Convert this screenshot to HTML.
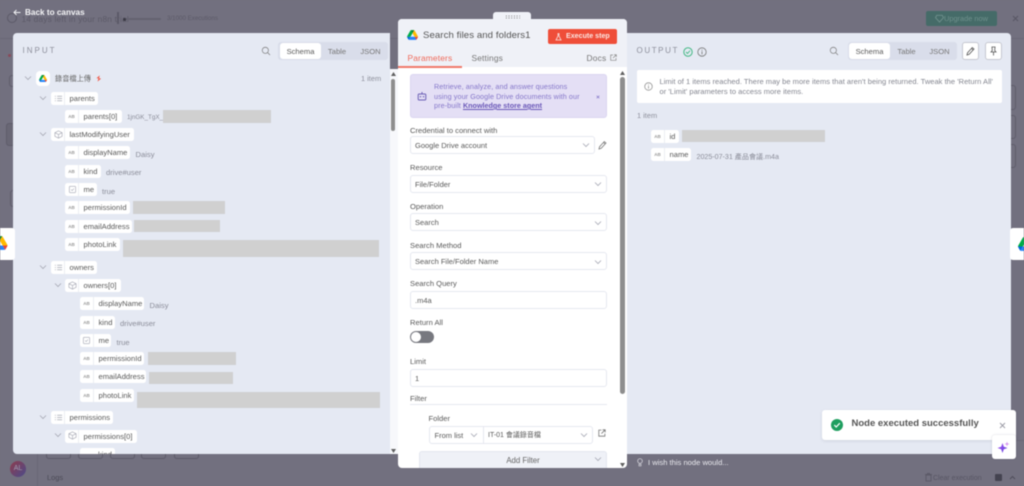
<!DOCTYPE html>
<html lang="en"><head><meta charset="utf-8"><title>Search files and folders1</title>
<style>
*{box-sizing:border-box}
html,body{margin:0;padding:0;width:1024px;height:486px;overflow:hidden;background:#72707f}
body{font-family:"Liberation Sans","Noto Sans CJK TC",sans-serif;font-size:7.6px;color:#5a5a5a}
#r{position:absolute;left:0;top:0;width:1024px;height:486px;overflow:hidden;filter:blur(.45px)}
#r div,#r span.a,#r svg.a{position:absolute}
.t{white-space:nowrap;line-height:12px}
.pill{height:13px;background:#fff;border-radius:2.5px;color:#5a5a5a;line-height:14px;white-space:nowrap}
.pill i{position:absolute;left:0;top:0;bottom:0;width:14px;border-right:1px solid #eceef3;font-style:normal;font-size:4.5px;color:#999;text-align:center;font-weight:bold;line-height:13px}
.pill b{position:absolute;left:18.5px;top:0;font-weight:normal}
.v{color:#8b8d99;white-space:nowrap;line-height:12px;margin-top:1px}
.g{background:#d0d0d0}
.lb{color:#5a5a5a;white-space:nowrap;line-height:12px;left:410px;margin-top:1px}
.f{left:410px;width:197px;height:18px;background:#fff;border:1px solid #e6e8f0;border-radius:3px;padding-left:4px;line-height:17.5px;color:#5a5a5a;font-size:7.5px;white-space:nowrap}
.seg{background:#d9ddea;border-radius:3px;height:18px}
.seg span{position:absolute;top:1px;height:16px;line-height:17.5px;text-align:center;color:#777;font-size:7.6px}
.seg span.on{background:#fff;border-radius:3px;color:#5a5a5a}
.btn{width:17px;height:18px;background:#fff;border:1px solid #c6c8d0;border-radius:3px}
.o{border:1px solid #5f5d6b;border-radius:3px}
</style></head><body>
<svg width="0" height="0" style="position:absolute"><defs>
<symbol id="gd" viewBox="0 0 87.3 78"><path d="m6.6 66.85 3.85 6.65c.8 1.4 1.95 2.5 3.3 3.3l13.75-23.8h-27.5c0 1.55.4 3.1 1.2 4.5z" fill="#0066da"/><path d="m43.65 25-13.75-23.8c-1.35.8-2.5 1.9-3.3 3.3l-25.4 44a9.06 9.06 0 0 0-1.2 4.5h27.5z" fill="#00ac47"/><path d="m73.55 76.8c1.35-.8 2.5-1.9 3.3-3.3l1.6-2.75 7.65-13.25c.8-1.4 1.2-2.95 1.2-4.5h-27.502l5.852 11.5z" fill="#ea4335"/><path d="m43.65 25 13.75-23.8c-1.35-.8-2.9-1.2-4.5-1.2h-18.5c-1.6 0-3.15.45-4.5 1.2z" fill="#00832d"/><path d="m59.8 53h-32.3l-13.75 23.8c1.35.8 2.9 1.2 4.5 1.2h50.8c1.6 0 3.15-.45 4.5-1.2z" fill="#2684fc"/><path d="m73.4 26.5-12.7-22c-.8-1.4-1.95-2.5-3.3-3.3l-13.75 23.8 16.15 28h27.45c0-1.55-.4-3.1-1.2-4.5z" fill="#ffba00"/></symbol>
<symbol id="dn" viewBox="0 0 8 8"><path d="M1 2.5 4 5.5 7 2.5" fill="none" stroke="#a5a7b3" stroke-width=".8"/></symbol>
<symbol id="ls" viewBox="0 0 10 10"><path d="M3.5 2.5H9M3.5 5H9M3.5 7.5H9M1 2.5h1M1 5h1M1 7.5h1" stroke="#a5a7b3" stroke-width=".7" fill="none"/></symbol>
<symbol id="ob" viewBox="0 0 10 10"><path d="M5 1 9 3V7L5 9 1 7V3ZM1 3 5 5 9 3M5 5V9" stroke="#a5a7b3" stroke-width=".7" fill="none"/></symbol>
<symbol id="ck" viewBox="0 0 10 10"><rect x="1.5" y="1.5" width="7" height="7" rx="1" stroke="#a5a7b3" stroke-width=".7" fill="none"/><path d="M3.5 5 4.7 6.2 6.6 4" stroke="#a5a7b3" stroke-width=".6" fill="none"/></symbol>
<symbol id="se" viewBox="0 0 12 12"><circle cx="5.2" cy="5.2" r="3.7" stroke="#777" fill="none" stroke-width=".8"/><path d="M8 8 10.8 10.8" stroke="#777" stroke-width=".8"/></symbol>
</defs></svg>
<div id="r">
<!-- background app -->
<div style="left:0;top:0;width:1024px;height:486px;background:#72707f"></div>
<div style="left:0;top:38px;width:1024px;height:1px;background:#6a6876"></div>
<div style="left:37px;top:440px;width:987px;height:1px;background:#6a6876"></div>
<div style="left:37px;top:38px;width:1px;height:448px;background:#6a6876"></div>
<div class="o" style="left:9px;top:75px;width:6px;height:12px"></div>
<div class="o" style="left:6px;top:123px;width:9px;height:23px;background:#696775"></div>
<div class="o" style="left:10px;top:190px;width:6px;height:17px"></div>
<div style="left:8px;top:54px;width:3px;height:3px;border-radius:50%;background:#8a4a5a"></div>
<div class="o" style="left:1005px;top:85px;width:11px;height:25px"></div>
<div class="o" style="left:1005px;top:115px;width:11px;height:24px"></div>
<div class="o" style="left:1005px;top:144px;width:11px;height:24px"></div>
<div class="t" style="left:21.5px;top:13px;color:#5c5a68;font-size:8.3px;letter-spacing:.2px">14 days left in your n8n trial</div>
<div style="left:7px;top:13px;width:10px;height:10px;border:1px solid #5c5a68;border-radius:50%"></div>
<div style="left:117px;top:12px;width:1.5px;height:12px;background:#5c5a68"></div>
<div style="left:123px;top:18px;width:38px;height:2px;background:#646270;border-radius:1px"></div>
<div style="left:123px;top:17.5px;width:3px;height:3px;background:#3b3a45;border-radius:1.5px"></div>
<div class="t" style="left:167px;top:13px;color:#5c5a68;font-size:6.2px">3/1000 Executions</div>
<div style="left:926px;top:11px;width:71px;height:15px;background:#456b68;border-radius:2px;color:#6f908c;line-height:16px;font-size:7.4px;padding-left:18px">Upgrade now</div>
<svg class="a" style="left:935px;top:14px" width="9" height="9" viewBox="0 0 10 10"><path d="M2 1.5H8L9.5 4 5 9 .5 4Z" fill="none" stroke="#6f908c"/></svg>
<svg class="a" style="left:1012px;top:15px" width="7" height="7" viewBox="0 0 7 7"><path d="M1 1 6 6M6 1 1 6" stroke="#585664" stroke-width="1"/></svg>
<div style="left:10px;top:461px;width:16px;height:16px;border-radius:50%;background:linear-gradient(135deg,#8d3c4e,#4b4b8a);color:#a29fb0;text-align:center;line-height:16px;font-size:7px">AL</div>
<div class="t" style="left:47px;top:472px;color:#4b4a56;font-size:7.4px">Logs</div>
<div class="t" style="left:933px;top:472.5px;color:#585664;font-size:7px">Clear execution</div>
<svg class="a" style="left:925px;top:473px" width="7" height="9" viewBox="0 0 7 9"><path d="M1 2H6V8H1ZM0 1.5H7M2.5 1V.4H4.5V1" stroke="#585664" fill="none" stroke-width=".8"/></svg>
<div style="left:995px;top:474px;width:7px;height:7px;background:#444350;border-radius:1px"></div>
<svg class="a" style="left:1009px;top:475px" width="7" height="5" viewBox="0 0 7 5"><path d="M1 4 3.5 1.5 6 4" stroke="#504e5c" fill="none"/></svg>
<div style="left:46px;top:454px;width:25px;height:5px;border:1px solid #5c5a68;border-top:0;border-radius:0 0 3px 3px"></div>
<div style="left:78px;top:454px;width:25px;height:5px;border:1px solid #5c5a68;border-top:0;border-radius:0 0 3px 3px"></div>
<div style="left:110px;top:454px;width:25px;height:5px;border:1px solid #5c5a68;border-top:0;border-radius:0 0 3px 3px"></div>
<div style="left:141px;top:454px;width:25px;height:5px;border:1px solid #5c5a68;border-top:0;border-radius:0 0 3px 3px"></div>
<div style="left:174px;top:454px;width:25px;height:5px;border:1px solid #5c5a68;border-top:0;border-radius:0 0 3px 3px"></div>

<div class="t" style="left:25px;top:7px;color:#f4f4f6;font-size:8.2px;font-weight:bold;line-height:12px">Back to canvas</div>
<svg class="a" style="left:13px;top:9px" width="8" height="7" viewBox="0 0 8 7"><path d="M7.5 3.5H1M3.5 1 1 3.5 3.5 6" stroke="#f0f0f3" fill="none" stroke-width="1"/></svg>

<!-- LEFT PANEL -->
<div style="left:13px;top:33px;width:377px;height:421px;background:#e5e9f3;border-radius:4px 0 0 4px"></div>
<div style="left:390px;top:69px;width:7.5px;height:385px;background:#f7f8fb"></div>
<div style="left:391px;top:79px;width:4px;height:52px;background:#8e8e8e;border-radius:2px"></div>
<svg class="a" style="left:390.5px;top:72px" width="5" height="4"><path d="M0 4H5L2.5 0Z" fill="#5f5f5f"/></svg>
<svg class="a" style="left:390.5px;top:449px" width="5" height="4"><path d="M0 0H5L2.5 4Z" fill="#5f5f5f"/></svg>
<div class="t" style="left:22.5px;top:44.5px;color:#8d8f9b;font-size:8px;letter-spacing:2px">INPUT</div>
<svg class="a" style="left:261px;top:46px" width="10" height="10"><use href="#se"/></svg>
<div class="seg" style="left:278px;top:42px;width:110px"><span class="on" style="left:2px;width:41px">Schema</span><span style="left:41px;width:36px">Table</span><span style="left:77px;width:31px">JSON</span></div>

<svg class="a" style="left:24px;top:74px" width="8" height="8"><use href="#dn"/></svg>
<div style="left:36px;top:71px;width:14px;height:15px;background:#fff;border-radius:4px"></div>
<svg class="a" style="left:39px;top:75px" width="8" height="7.2"><use href="#gd"/></svg>
<div class="t" style="left:55px;top:72.5px;color:#666;font-size:7.2px">錄音檔上傳</div>
<svg class="a" style="left:95.5px;top:75px" width="5.5" height="7" viewBox="0 0 6 7"><path d="M3.6 0 .5 3.4H2.6L2.2 7 5.5 3.2H3.3Z" fill="#ef5a4a" transform="rotate(8 3 3.5)"/></svg>
<div class="t" style="left:361px;top:73px;color:#8d8f9b;font-size:7.4px">1 item</div>

<!-- rows -->
<svg class="a" style="left:39px;top:94px" width="8" height="8"><use href="#dn"/></svg>
<div class="pill" style="left:51px;top:92px;width:47px"><i></i><b>parents</b></div><svg class="a" style="left:54px;top:94px" width="9" height="9"><use href="#ls"/></svg>
<div class="pill" style="left:65px;top:110px;width:57px"><i>AB</i><b>parents[0]</b></div>
<div class="v" style="left:127px;top:111px;font-size:6.3px">1jnGK_TgX_</div><div class="g" style="left:163px;top:110px;width:108px;height:13px"></div>

<svg class="a" style="left:39px;top:130px" width="8" height="8"><use href="#dn"/></svg>
<div class="pill" style="left:51px;top:128px;width:83px"><i></i><b>lastModifyingUser</b></div><svg class="a" style="left:54px;top:130px" width="9" height="9"><use href="#ob"/></svg>
<div class="pill" style="left:65px;top:146px;width:65px"><i>AB</i><b>displayName</b></div><div class="v" style="left:135.5px;top:148px">Daisy</div>
<div class="pill" style="left:65px;top:165px;width:36px"><i>AB</i><b>kind</b></div><div class="v" style="left:106px;top:166px">drive#user</div>
<div class="pill" style="left:65px;top:183px;width:32px"><i></i><b>me</b></div><svg class="a" style="left:67.5px;top:185px" width="9" height="9"><use href="#ck"/></svg><div class="v" style="left:102px;top:185px">true</div>
<div class="pill" style="left:65px;top:201px;width:65px"><i>AB</i><b>permissionId</b></div><div class="g" style="left:133px;top:201px;width:92px;height:13px"></div>
<div class="pill" style="left:65px;top:220px;width:67px"><i>AB</i><b>emailAddress</b></div><div class="g" style="left:134px;top:220px;width:86px;height:12px"></div>
<div class="pill" style="left:65px;top:238px;width:55px"><i>AB</i><b>photoLink</b></div><div class="g" style="left:123px;top:240px;width:256px;height:17px"></div>

<svg class="a" style="left:39px;top:263px" width="8" height="8"><use href="#dn"/></svg>
<div class="pill" style="left:51px;top:261px;width:46px"><i></i><b>owners</b></div><svg class="a" style="left:54px;top:263px" width="9" height="9"><use href="#ls"/></svg>
<svg class="a" style="left:53.5px;top:281px" width="8" height="8"><use href="#dn"/></svg>
<div class="pill" style="left:65px;top:279px;width:56px"><i></i><b>owners[0]</b></div><svg class="a" style="left:68px;top:281px" width="9" height="9"><use href="#ob"/></svg>
<div class="pill" style="left:80px;top:297px;width:64px"><i>AB</i><b>displayName</b></div><div class="v" style="left:149.5px;top:299px">Daisy</div>
<div class="pill" style="left:80px;top:316px;width:35px"><i>AB</i><b>kind</b></div><div class="v" style="left:120px;top:317px">drive#user</div>
<div class="pill" style="left:80px;top:334px;width:31px"><i></i><b>me</b></div><svg class="a" style="left:82px;top:336px" width="9" height="9"><use href="#ck"/></svg><div class="v" style="left:116.5px;top:336px">true</div>
<div class="pill" style="left:80px;top:352px;width:64px"><i>AB</i><b>permissionId</b></div><div class="g" style="left:148px;top:352px;width:88px;height:13px"></div>
<div class="pill" style="left:80px;top:370px;width:66px"><i>AB</i><b>emailAddress</b></div><div class="g" style="left:149px;top:372px;width:84px;height:12px"></div>
<div class="pill" style="left:80px;top:389px;width:54px"><i>AB</i><b>photoLink</b></div><div class="g" style="left:137px;top:392px;width:243px;height:16px"></div>

<svg class="a" style="left:39px;top:413px" width="8" height="8"><use href="#dn"/></svg>
<div class="pill" style="left:51px;top:411px;width:62px"><i></i><b>permissions</b></div><svg class="a" style="left:54px;top:413px" width="9" height="9"><use href="#ls"/></svg>
<svg class="a" style="left:53.5px;top:431px" width="8" height="8"><use href="#dn"/></svg>
<div class="pill" style="left:65px;top:430px;width:72px"><i></i><b>permissions[0]</b></div><svg class="a" style="left:68px;top:431px" width="9" height="9"><use href="#ob"/></svg>
<div style="left:80px;top:448px;width:35px;height:6px;overflow:hidden;background:#fff;border-radius:2.5px 2.5px 0 0;color:#5a5a5a;line-height:13px;padding-left:18px">kind</div>

<!-- RIGHT PANEL -->
<div style="left:627px;top:33px;width:384px;height:421px;background:#e5e9f3;border-radius:0 4px 4px 0"></div>
<div class="t" style="left:636.5px;top:45px;color:#8d8f9b;font-size:8px;letter-spacing:1.6px">OUTPUT</div>
<svg class="a" style="left:683px;top:46.5px" width="10" height="10" viewBox="0 0 10 10"><circle cx="5" cy="5" r="4.2" stroke="#41b883" fill="none"/><path d="M3 5 4.5 6.5 7 3.7" stroke="#41b883" fill="none" stroke-width=".9"/></svg>
<svg class="a" style="left:697px;top:46.5px" width="10" height="10" viewBox="0 0 10 10"><circle cx="5" cy="5" r="4.2" stroke="#777" fill="none" stroke-width=".8"/><path d="M5 4.3V7.4M5 2.6V3.5" stroke="#777" stroke-width=".8"/></svg>
<svg class="a" style="left:829px;top:46px" width="10" height="10"><use href="#se"/></svg>
<div class="seg" style="left:848px;top:42px;width:109px"><span class="on" style="left:1px;width:41px">Schema</span><span style="left:41px;width:35px">Table</span><span style="left:75px;width:33px">JSON</span></div>
<div class="btn" style="left:962px;top:42px"></div>
<svg class="a" style="left:966px;top:46px" width="9" height="10" viewBox="0 0 9 10"><path d="M1 9 1.5 6.8 6.3 1.5 8 3 3.2 8.3ZM5.5 2.4 7.2 3.9" stroke="#555" fill="none" stroke-width=".8"/></svg>
<div class="btn" style="left:985px;top:42px"></div>
<svg class="a" style="left:989px;top:46px" width="9" height="10" viewBox="0 0 9 10"><path d="M3 1H6L5.7 4.5 7 6H2L3.3 4.5ZM4.5 6V9.5M2.5 1H6.5" stroke="#555" fill="none" stroke-width=".8"/></svg>

<div style="left:637px;top:70px;width:365px;height:33px;background:#fff;border-radius:2px"></div>
<svg class="a" style="left:643.5px;top:81.5px" width="9" height="9" viewBox="0 0 10 10"><circle cx="5" cy="5" r="4.2" stroke="#888" fill="none" stroke-width=".8"/><path d="M5 4.3V7.4M5 2.6V3.5" stroke="#888" stroke-width=".8"/></svg>
<div class="t" style="left:659.5px;top:76.5px;color:#83858f;font-size:7.5px;letter-spacing:.03px;line-height:10px">Limit of 1 items reached. There may be more items that aren't being returned. Tweak the 'Return All'<br>or 'Limit' parameters to access more items.</div>
<div class="t" style="left:637px;top:110px;color:#8d8f9b;font-size:7.4px">1 item</div>
<div class="pill" style="left:651px;top:130px;width:28px"><i>AB</i><b>id</b></div>
<div class="g" style="left:682px;top:130px;width:143px;height:12px"></div>
<div class="pill" style="left:651px;top:148px;width:40px"><i>AB</i><b>name</b></div>
<div class="v" style="left:696.5px;top:150px;font-size:7.1px">2025-07-31 產品會議.m4a</div>

<!-- CENTER PANEL -->
<div style="left:493px;top:12px;width:38px;height:9px;background:#f0f2f8;border-radius:3px 3px 0 0"></div>
<div style="left:505px;top:15px;width:15px;height:4px;background-image:radial-gradient(#777 .55px,transparent .7px);background-size:2.7px 2px"></div>
<div style="left:398px;top:19px;width:229px;height:449px;background:#fff;border-radius:4px"></div>
<div style="left:398px;top:19px;width:229px;height:48px;background:#eff1f7;border-radius:4px 4px 0 0"></div>
<svg class="a" style="left:407px;top:30px" width="11" height="10"><use href="#gd"/></svg>
<div class="t" style="left:423px;top:30px;color:#555;font-size:9.6px;letter-spacing:.08px">Search files and folders1</div>
<div style="left:548px;top:29px;width:69px;height:15px;background:#ef4e39;border-radius:2px;color:#fbe6e3;font-size:7.1px;line-height:15px;padding-left:18px;font-weight:bold">Execute step</div>
<svg class="a" style="left:555px;top:32.5px" width="7" height="8" viewBox="0 0 7 8"><path d="M2.5 .7H4.5M3 .7V3L1 7H6L4 3V.7" stroke="#fbe6e3" fill="none" stroke-width=".8"/></svg>
<div class="t" style="left:407.5px;top:52px;color:#ef6a5a;font-size:8.4px;letter-spacing:.15px">Parameters</div>
<div style="left:398px;top:66px;width:64px;height:1.5px;background:#f0796a"></div>
<div class="t" style="left:471.5px;top:52px;color:#777;font-size:8.4px;letter-spacing:.15px">Settings</div>
<div class="t" style="left:586.5px;top:52px;color:#777;font-size:8.4px;letter-spacing:.2px">Docs</div>
<svg class="a" style="left:610px;top:53.5px" width="7" height="7" viewBox="0 0 7 7"><path d="M3 1H.7V6.3H6V4M3 4 6.3 .7M4 .7H6.3V3" stroke="#888" fill="none" stroke-width=".7"/></svg>
<div style="left:620px;top:68px;width:5.5px;height:396px;background:#fff"></div>
<div style="left:620px;top:77px;width:5px;height:317px;background:#8e8e8e;border-radius:2.5px"></div>
<svg class="a" style="left:620px;top:71px" width="5" height="4"><path d="M0 4H5L2.5 0Z" fill="#5f5f5f"/></svg>
<svg class="a" style="left:620px;top:463px" width="5" height="4"><path d="M0 0H5L2.5 4Z" fill="#5f5f5f"/></svg>

<div style="left:410px;top:74px;width:197px;height:44px;background:#e4dff5;border:1px solid #dbd5f1;border-radius:3px"></div>
<svg class="a" style="left:417px;top:91px" width="10" height="10" viewBox="0 0 10 10"><rect x="1.2" y="3" width="7.6" height="6" rx="1" stroke="#6b5fb5" fill="none"/><path d="M5 1V3" stroke="#6b5fb5"/><circle cx="3.5" cy="5.7" r=".7" fill="#6b5fb5"/><circle cx="6.5" cy="5.7" r=".7" fill="#6b5fb5"/></svg>
<div class="t" style="left:434px;top:82px;color:#8577c9;font-size:7.2px;line-height:9.5px;letter-spacing:.1px">Retrieve, analyze, and answer questions<br>using your Google Drive documents with our<br>pre-built <span style="color:#6a58b8;text-decoration:underline;font-weight:bold;letter-spacing:0">Knowledge store agent</span></div>
<svg class="a" style="left:596px;top:95px" width="4" height="4"><path d="M.7.7 3.3 3.3M3.3.7.7 3.3" stroke="#8577c9" stroke-width=".7"/></svg>

<div class="lb t" style="top:124px">Credential to connect with</div>
<div class="f" style="top:136px;width:185px">Google Drive account</div>
<svg class="a" style="left:582px;top:141px" width="8" height="8"><use href="#dn"/></svg>
<svg class="a" style="left:598px;top:140px" width="9" height="10" viewBox="0 0 9 10"><path d="M1 9 1.5 6.8 6.3 1.5 8 3 3.2 8.3ZM5.5 2.4 7.2 3.9" stroke="#777" fill="none" stroke-width=".8"/></svg>

<div class="lb t" style="top:161px">Resource</div>
<div class="f" style="top:175px;">File/Folder</div>
<svg class="a" style="left:594px;top:180px" width="8" height="8"><use href="#dn"/></svg>
<div class="lb t" style="top:200px">Operation</div>
<div class="f" style="top:213px">Search</div>
<svg class="a" style="left:594px;top:218.5px" width="8" height="8"><use href="#dn"/></svg>
<div class="lb t" style="top:239px">Search Method</div>
<div class="f" style="top:252px">Search File/Folder Name</div>
<svg class="a" style="left:594px;top:257.5px" width="8" height="8"><use href="#dn"/></svg>
<div class="lb t" style="top:277px">Search Query</div>
<div class="f" style="top:291px">.m4a</div>
<div class="lb t" style="top:316px">Return All</div>
<div style="left:410px;top:331px;width:24px;height:12px;background:#77787f;border-radius:6px"></div>
<div style="left:411px;top:332px;width:10px;height:10px;background:#fff;border-radius:50%"></div>
<div class="lb t" style="top:355px">Limit</div>
<div class="f" style="top:369px">1</div>
<div class="lb t" style="top:392px">Filter</div>
<div style="left:410px;top:404px;width:197px;height:1px;background:#e6e8f0"></div>
<div class="t" style="left:428.5px;top:413px;color:#5a5a5a">Folder</div>
<div class="f" style="left:429px;top:426px;width:164px;height:18px;padding-left:4.5px">From list</div>
<div style="left:483px;top:426px;width:1px;height:18px;background:#e6e8f0"></div>
<div class="t" style="left:488px;top:430px;color:#5a5a5a;font-size:7px">IT-01 會議錄音檔</div>
<svg class="a" style="left:470px;top:431px" width="8" height="8"><use href="#dn"/></svg>
<svg class="a" style="left:580px;top:431px" width="8" height="8"><use href="#dn"/></svg>
<svg class="a" style="left:598px;top:429px" width="8" height="8" viewBox="0 0 7 7"><path d="M3 1H.7V6.3H6V4M3 4 6.3 .7M4 .7H6.3V3" stroke="#777" fill="none" stroke-width=".7"/></svg>
<div style="left:419px;top:451px;width:188px;height:17px;background:#eff1f7;border:1px solid #e4e6ef;border-bottom:0;border-radius:3px 3px 0 0;color:#666;text-align:center;line-height:17.5px;font-size:7.8px;padding-left:20px">Add Filter</div>
<svg class="a" style="left:594px;top:455px" width="8" height="8"><use href="#dn"/></svg>

<!-- below center -->
<svg class="a" style="left:636.5px;top:457.5px" width="6" height="9" viewBox="0 0 6 9"><circle cx="3" cy="3" r="2.3" stroke="#e4e4ea" fill="none" stroke-width=".7"/><path d="M2 6.3H4V8H2Z" stroke="#e4e4ea" fill="none" stroke-width=".6"/></svg>
<div class="t" style="left:648px;top:456.5px;color:#e8e8ed;font-size:7.6px">I wish this node would...</div>

<!-- node cards -->
<div style="left:0;top:228px;width:15px;height:32px;background:#fff;border-radius:0 3px 3px 0;overflow:hidden"><svg class="a" style="left:-8px;top:8px" width="15.5" height="14"><use href="#gd"/></svg></div>
<div style="left:1010px;top:228px;width:14px;height:32px;background:#fff;border-radius:3px 0 0 3px;overflow:hidden"><svg class="a" style="left:7.5px;top:9px" width="15.5" height="14"><use href="#gd"/></svg></div>

<!-- toast -->
<div style="left:822px;top:410px;width:194px;height:30px;background:#fff;border-radius:3px;box-shadow:0 1px 3px rgba(60,60,80,.12)"></div>
<svg class="a" style="left:831px;top:419px" width="12" height="12" viewBox="0 0 12 12"><circle cx="6" cy="6" r="6" fill="#1f9e5f"/><path d="M3.3 6.1 5.2 8 8.8 4.2" stroke="#fff" fill="none" stroke-width="1.2"/></svg>
<div class="t" style="left:851.5px;top:418px;color:#555;font-size:9.5px;font-weight:bold">Node executed successfully</div>
<svg class="a" style="left:999px;top:421.5px" width="7" height="7" viewBox="0 0 7 7"><path d="M1 1 6 6M6 1 1 6" stroke="#9a9aa4" stroke-width=".9"/></svg>
<div style="left:992px;top:435px;width:24px;height:24px;background:#fff;border-radius:3px;box-shadow:0 0 2px rgba(60,60,80,.2)"></div>
<svg class="a" style="left:997px;top:441px" width="13" height="13" viewBox="0 0 13 13"><defs><linearGradient id="sp" x1="0" y1="0" x2="1" y2="1"><stop offset="0" stop-color="#a855f7"/><stop offset="1" stop-color="#5b3fd6"/></linearGradient></defs><path d="M5.5 2 6.8 5.7 10.5 7 6.8 8.3 5.5 12 4.2 8.3.5 7 4.2 5.7Z" fill="url(#sp)"/><path d="M10 .5 10.6 2.4 12.5 3 10.6 3.6 10 5.5 9.4 3.6 7.5 3 9.4 2.4Z" fill="#d490ee"/></svg>
</div>
</body></html>
